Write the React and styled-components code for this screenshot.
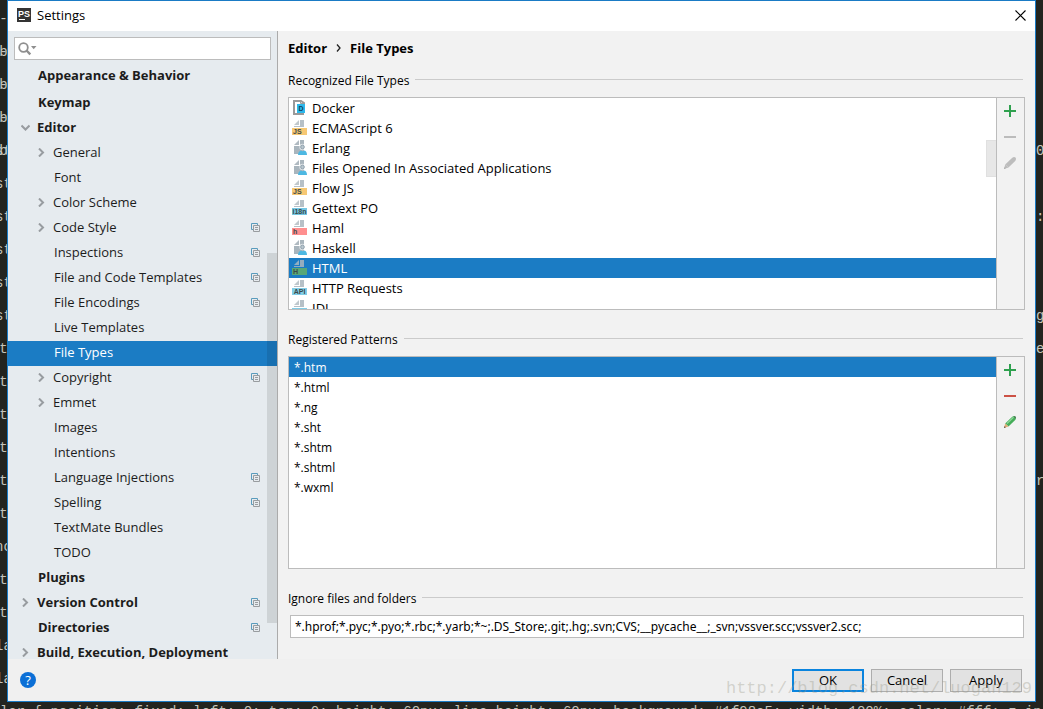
import React, { useState } from "react";
import styled, { createGlobalStyle } from "styled-components";

const tree = [
  { title: "Appearance & Behavior", level: 0, first: true },
  { title: "Keymap", level: 0 },
  { title: "Editor", level: 0, arrow: "down" },
  { title: "General", level: 1, arrow: "right" },
  { title: "Font", level: 1 },
  { title: "Color Scheme", level: 1, arrow: "right" },
  { title: "Code Style", level: 1, arrow: "right", project: true },
  { title: "Inspections", level: 1, project: true },
  { title: "File and Code Templates", level: 1, project: true },
  { title: "File Encodings", level: 1, project: true },
  { title: "Live Templates", level: 1 },
  { title: "File Types", level: 1 },
  { title: "Copyright", level: 1, arrow: "right", project: true },
  { title: "Emmet", level: 1, arrow: "right" },
  { title: "Images", level: 1 },
  { title: "Intentions", level: 1 },
  { title: "Language Injections", level: 1, project: true },
  { title: "Spelling", level: 1, project: true },
  { title: "TextMate Bundles", level: 1 },
  { title: "TODO", level: 1 },
  { title: "Plugins", level: 0 },
  { title: "Version Control", level: 0, arrow: "right", project: true },
  { title: "Directories", level: 0, project: true },
  { title: "Build, Execution, Deployment", level: 0, arrow: "right" },
];

const fileTypes = [
  { title: "Docker", kind: "docker" },
  { title: "ECMAScript 6", badge: "JS", color: "#f7c873" },
  { title: "Erlang", kind: "user" },
  { title: "Files Opened In Associated Applications", kind: "user" },
  { title: "Flow JS", badge: "JS", color: "#f7c873" },
  { title: "Gettext PO", badge: "i18n", color: "#74c6e3" },
  { title: "Haml", badge: "h", color: "#ff8f8f" },
  { title: "Haskell", kind: "user" },
  { title: "HTML", badge: "H", color: "#57a777" },
  { title: "HTTP Requests", badge: "API", color: "#82cde6" },
  { title: "IDL", badge: "IDL", color: "#82cde6" },
];

const patterns = ["*.htm", "*.html", "*.ng", "*.sht", "*.shtm", "*.shtml", "*.wxml"];

const codeLeft = ["-b", "-b", "-b", "-b", "st", "st", "st", "st", "st", "st", "t", "t", "t", "t", "t", "t", "nc", "t", "t", "la", "la"];
const codeRight = ["", "", "", "", "0", "", ":", "", "", "g", "e", "", "", "", "r"];
const codeBottom =
  "lar { position: fixed; left: 0; top: 0; height: 60px; line-height: 60px; background: #1f98e5; width: 100%; color: #fff; z-index: 9";

function Arrow({ dir }) {
  return (
    <svg width="9" height="9" viewBox="0 0 9 9" fill="none" stroke="#989ca0" strokeWidth="2">
      {dir === "down" && <path d="M0.5 2.5 4.5 6.5 8.5 2.5" />}
      {dir === "right" && <path d="M2 0.5 6 4.5 2 8.5" />}
    </svg>
  );
}

function ProjectIcon() {
  return (
    <svg width="9" height="9" viewBox="0 0 9 9" fill="none">
      <path d="M2.5 6.5H0.5V0.5H6.5V2" stroke="#5a9cbd" />
      <path d="M2.5 2.5H8.5V8.5H2.5Z" stroke="#999da0" />
      <path d="M4 4.5H7M4 6.5H7" stroke="#999da0" />
    </svg>
  );
}

function FileIcon({ kind, badge, color }) {
  if (kind === "docker") {
    return (
      <svg width="16" height="16" viewBox="0 0 16 16">
        <path d="M12 4V3L9 1H2V14H12" fill="none" stroke="#9a9a9a" strokeWidth="2" />
        <path d="M8.500 1V3.500H12" fill="none" stroke="#9a9a9a" />
        <rect x="5" y="4" width="8" height="9" fill="#2cb8eb" />
        <text x="9" y="11" textAnchor="middle" fontFamily="Liberation Sans, sans-serif" fontSize="7" fontWeight="700" fill="#14425a">
          D
        </text>
      </svg>
    );
  }
  if (kind === "user") {
    return (
      <svg width="16" height="16" viewBox="0 0 16 16">
        <path d="M2 5 7 0V5Z" fill="#b0bac1" />
        <path d="M8 0H12V14H2V6H8Z" fill="#a9b5bd" />
        <circle cx="10.500" cy="7" r="3.200" fill="#fff" opacity="0.6" />
        <circle cx="10.500" cy="7" r="1.800" fill="#b9c7cf" stroke="#8fa1ad" />
        <path d="M6 15C6 12 8 11 9 10.500C10 11.500 11.500 11.500 12.500 10.500C14 11 15 12.500 15 15Z" fill="#4db8e2" />
      </svg>
    );
  }
  return (
    <svg width="16" height="16" viewBox="0 0 16 16">
      <path d="M2 5 7 0V5Z" fill="#b0bac1" opacity="0.8" />
      <path d="M8 0H12V7H2V6H8Z" fill="#a9b5bd" opacity="0.85" />
      <rect x="0" y="8" width="15" height="7" fill={color} />
      <text
        x={badge.length > 2 ? 7.5 : 1}
        y="14"
        textAnchor={badge.length > 2 ? "middle" : "start"}
        fontFamily="Liberation Sans, sans-serif"
        fontSize="7"
        fontWeight="700"
        fill="#3c4a4a"
      >
        {badge}
      </text>
    </svg>
  );
}

function PlusIcon() {
  return (
    <svg width="12" height="12" viewBox="0 0 12 12">
      <path d="M5 0H7V5H12V7H7V12H5V7H0V5H5Z" fill="#2fa14f" />
    </svg>
  );
}

function MinusIcon({ off }) {
  return (
    <svg width="12" height="12" viewBox="0 0 12 12">
      <path d="M0 5H12V7H0Z" fill={off ? "#bcbcbc" : "#cc5145"} />
    </svg>
  );
}

function PencilIcon({ off }) {
  return (
    <svg width="12" height="12" viewBox="0 0 12 12">
      <path d="M1.200 7.500 8 1Q10 -0.600 11.500 0.500Q12.600 2 11.200 4L4.500 10.600Z" fill={off ? "#bdbdbd" : "#45ad59"} />
      {!off && <path d="M3 7.500 9.500 1.200" stroke="#8fd79a" strokeWidth="1.200" />}
      {!off && <path d="M9.800 0.500Q11 0 11.700 1Q12 1.800 11.500 2.500Z" fill="#56665a" />}
      <path d="M1.200 7.500 4.500 10.600 0 12Z" fill={off ? "#bdbdbd" : "#e3ad78"} />
      <path d="M0.600 10.300 1.800 11.300 0 12Z" fill={off ? "#a8a8a8" : "#333"} />
    </svg>
  );
}

function Tools({ locked, name }) {
  return (
    <ToolColumn>
      <ToolBtn aria-label={`Add ${name}`}>
        <PlusIcon />
      </ToolBtn>
      <ToolBtn aria-label={`Remove ${name}`} disabled={locked}>
        <MinusIcon off={locked} />
      </ToolBtn>
      <ToolBtn aria-label={`Edit ${name}`} disabled={locked}>
        <PencilIcon off={locked} />
      </ToolBtn>
    </ToolColumn>
  );
}

export default function App() {
  const [page, setPage] = useState("File Types");
  const [type, setType] = useState("HTML");
  const [pattern, setPattern] = useState("*.htm");
  const [ignored, setIgnored] = useState(
    "*.hprof;*.pyc;*.pyo;*.rbc;*.yarb;*~;.DS_Store;.git;.hg;.svn;CVS;__pycache__;_svn;vssver.scc;vssver2.scc;"
  );

  return (
    <Desktop>
      <GlobalStyle />
      <CodeEdge $left aria-hidden="true">
        {codeLeft.map((text, i) => (
          <span key={i}>{text}</span>
        ))}
      </CodeEdge>

      <Window>
        <TitleBar>
          <svg width="15" height="14" viewBox="0 0 15 14">
            <rect width="14" height="14" fill="#343434" />
            <text x="1" y="9" fontFamily="Liberation Sans, sans-serif" fontSize="9" fontWeight="700" fill="#fff">
              PS
            </text>
            <rect x="2" y="11" width="6" height="1" fill="#fff" />
          </svg>
          <h1>Settings</h1>
          <CloseBtn aria-label="Close">
            <svg width="11" height="11" viewBox="0 0 11 11" stroke="#000" strokeWidth="1.100">
              <path d="M0.500 0.500 10.500 10.500M10.500 0.500 0.500 10.500" />
            </svg>
          </CloseBtn>
        </TitleBar>

        <Body>
          <Sidebar>
            <Search>
              <svg width="19" height="14" viewBox="0 0 19 14" fill="none">
                <circle cx="5.500" cy="5.500" r="4.300" stroke="#8f8f8f" strokeWidth="1.800" />
                <path d="M8.500 8.500 12.300 12.300" stroke="#8f8f8f" strokeWidth="2.400" />
                <path d="M13 4H18.500L15.700 7.200Z" fill="#8f8f8f" />
              </svg>
              <input type="text" aria-label="Search settings" />
            </Search>
            <Tree>
              {tree.map((item) => (
                <TreeRow
                  key={item.title}
                  $level={item.level}
                  $first={item.first}
                  $leaf={!item.arrow}
                  $active={item.title === page}
                  onClick={() => setPage(item.title)}
                >
                  <Arrow dir={item.arrow} />
                  <span>{item.title}</span>
                  {item.project && <ProjectIcon />}
                </TreeRow>
              ))}
            </Tree>
            <SideThumb />
          </Sidebar>

          <Content>
            <Crumbs>
              <span>Editor</span>
              <svg width="5" height="8" viewBox="0 0 5 8" fill="none" stroke="#222" strokeWidth="1.300">
                <path d="M1 0.500 4 4 1 7.500" />
              </svg>
              <span>File Types</span>
            </Crumbs>

            <GroupTitle>
              <h2>Recognized File Types</h2>
            </GroupTitle>
            <Panel>
              <List>
                {fileTypes.map((item) => (
                  <ListRow key={item.title} $active={item.title === type} onClick={() => setType(item.title)}>
                    <FileIcon {...item} />
                    <span>{item.title}</span>
                  </ListRow>
                ))}
                <ListThumb />
              </List>
              <Tools locked name="file type" />
            </Panel>

            <GroupTitle $gap>
              <h2>Registered Patterns</h2>
            </GroupTitle>
            <Panel>
              <List>
                {patterns.map((item) => (
                  <ListRow key={item} $plain $active={item === pattern} onClick={() => setPattern(item)}>
                    <span>{item}</span>
                  </ListRow>
                ))}
              </List>
              <Tools name="pattern" />
            </Panel>

            <GroupTitle $gap>
              <label htmlFor="ignored">Ignore files and folders</label>
            </GroupTitle>
            <TextField id="ignored" type="text" value={ignored} onChange={(e) => setIgnored(e.target.value)} />
          </Content>
        </Body>

        <Footer>
          <HelpBtn aria-label="Help">?</HelpBtn>
          <DialogBtn $primary>OK</DialogBtn>
          <DialogBtn>Cancel</DialogBtn>
          <DialogBtn>Apply</DialogBtn>
        </Footer>
        <Watermark>http://blog.csdn.net/luogan129</Watermark>
      </Window>

      <CodeEdge aria-hidden="true">
        {codeRight.map((text, i) => (
          <span key={i}>{text}</span>
        ))}
      </CodeEdge>
      <CodeLine aria-hidden="true">{codeBottom}</CodeLine>
    </Desktop>
  );
}

const GlobalStyle = createGlobalStyle`
  * {
    box-sizing: border-box;
  }

  body {
    margin: 0;
    font-family: "Open Sans", "Noto Sans", sans-serif;
    font-size: 13px;
    color: #000;
  }

  button,
  input {
    font: inherit;
    color: inherit;
    margin: 0;
    padding: 0;
    border: 0;
    outline: none;
    background: transparent;
  }

  h1,
  h2 {
    margin: 0;
    font-size: inherit;
    font-weight: 400;
  }
`;

const Desktop = styled.div`
  display: grid;
  grid-template-columns: 7px minmax(0, 1fr) 7px;
  grid-template-rows: minmax(0, 1fr) 7px;
  height: 100vh;
  overflow: hidden;
  background: #23241f;
  color: #c4c4bb;
  font-family: "Liberation Mono", monospace;
  font-size: 14px;
`;

const CodeEdge = styled.div`
  display: flex;
  flex-direction: column;
  align-items: ${(props) => (props.$left ? "center" : "flex-start")};
  padding-top: 3px;
  overflow: hidden;

  span {
    flex: none;
    height: 33px;
    line-height: 33px;
  }
`;

const CodeLine = styled.div`
  grid-column: 1 / -1;
  padding-top: 2px;
  line-height: 16px;
  white-space: pre;
  overflow: hidden;
`;

const Window = styled.div`
  position: relative;
  display: flex;
  flex-direction: column;
  min-width: 0;
  border: 1px solid #1a7bc5;
  background: #f0f0f0;
  color: #000;
  font-family: "Open Sans", "Noto Sans", sans-serif;
  font-size: 13px;
`;

const TitleBar = styled.header`
  flex: none;
  display: flex;
  align-items: center;
  gap: 5px;
  height: 30px;
  padding: 0 9px 2px;
  background: #fff;

  h1 {
    flex: 1;
  }
`;

const CloseBtn = styled.button`
  display: flex;
`;

const Body = styled.div`
  flex: 1;
  display: flex;
  min-height: 0;
`;

const Sidebar = styled.aside`
  position: relative;
  flex: none;
  display: flex;
  flex-direction: column;
  width: 270px;
  padding-top: 6px;
  border-right: 1px solid #ababab;
  background: #e6ebef;
  overflow: hidden;
`;

const Search = styled.label`
  flex: none;
  display: flex;
  align-items: center;
  height: 23px;
  margin: 0 6px 4px;
  padding-left: 3px;
  border: 1px solid #bcbcbc;
  background: #fff;

  input {
    flex: 1;
    min-width: 0;
  }
`;

const Tree = styled.nav`
  display: flex;
  flex-direction: column;
`;

const TreeRow = styled.button`
  flex: none;
  display: flex;
  align-items: center;
  gap: ${(props) => (props.$leaf ? 8 : 7)}px;
  height: ${(props) => (props.$first ? 27 : 25)}px;
  padding: 0 17px 0 ${(props) => (props.$level ? 29 : 13)}px;
  padding-bottom: ${(props) => (props.$first ? 4 : 2)}px;
  background: ${(props) => (props.$active ? "#1b7cc4" : "transparent")};
  color: ${(props) => (props.$active ? "#fff" : "#1c1c1c")};
  font-weight: ${(props) => (props.$level ? 400 : 700)};
  text-align: left;
  white-space: nowrap;

  span {
    flex: 1;
    padding-bottom: 2px;
  }
`;

const SideThumb = styled.div`
  position: absolute;
  top: 222px;
  right: 0;
  bottom: 36px;
  width: 10px;
  background: rgba(0, 0, 0, 0.1);
`;

const Content = styled.main`
  flex: 1;
  display: flex;
  flex-direction: column;
  min-width: 0;
  padding: 0 10px 21px;
  background: #f2f2f2;
`;

const Crumbs = styled.div`
  flex: none;
  display: flex;
  align-items: center;
  gap: 9px;
  height: 36px;
  padding-bottom: 2px;
  font-weight: 700;
`;

const GroupTitle = styled.div`
  flex: none;
  display: flex;
  align-items: center;
  gap: 6px;
  height: 28px;
  margin: ${(props) => (props.$gap ? 16 : 0)}px 2px 2px 0;
  font-size: 12px;

  h2,
  label {
    padding-bottom: 2px;
  }

  &::after {
    content: "";
    flex: 1;
    height: 1px;
    margin-bottom: 3px;
    background: #cbcbcb;
  }
`;

const Panel = styled.section`
  flex: 1;
  display: flex;
  min-height: 0;
  border: 1px solid #bcbcbc;
`;

const List = styled.div`
  position: relative;
  flex: 1;
  display: flex;
  flex-direction: column;
  min-width: 0;
  background: #fff;
  overflow: hidden;
`;

const ListRow = styled.button`
  flex: none;
  display: flex;
  align-items: center;
  gap: 4px;
  height: 20px;
  padding-left: ${(props) => (props.$plain ? 5 : 3)}px;
  background: ${(props) => (props.$active ? "#1b7cc4" : "transparent")};
  color: ${(props) => (props.$active ? "#fff" : "#000")};
  font-size: ${(props) => (props.$plain ? 12 : 13)}px;
  text-align: left;
`;

const ListThumb = styled.div`
  position: absolute;
  top: 42px;
  right: 0;
  width: 10px;
  height: 37px;
  border: 1px solid #e0e0e0;
  border-right: 0;
  background: #e7e7e7;
`;

const ToolColumn = styled.div`
  flex: none;
  width: 28px;
  border-left: 1px solid #bcbcbc;
`;

const ToolBtn = styled.button`
  display: flex;
  align-items: center;
  justify-content: center;
  width: 26px;
  height: 26px;
`;

const TextField = styled.input`
  flex: none;
  height: 23px;
  margin: 0 1px 0 2px;
  padding: 0 4px;
  border: 1px solid #bcbcbc;
  background: #fff;
  font-family: "Noto Sans", sans-serif;
  font-size: 12px;
`;

const Footer = styled.footer`
  flex: none;
  display: flex;
  align-items: center;
  gap: 7px;
  height: 42px;
  padding: 0 13px 0 12px;
`;

const HelpBtn = styled.button`
  width: 16px;
  height: 16px;
  margin-right: auto;
  border-radius: 50%;
  background: #0b6fd6;
  color: #fff;
  line-height: 16px;
`;

const DialogBtn = styled.button`
  width: 72px;
  height: 23px;
  border: ${(props) => (props.$primary ? "2px solid #0a84de" : "1px solid #adadad")};
  background: #e2e2e2;
  line-height: 18px;
`;

const Watermark = styled.div`
  position: absolute;
  right: 3px;
  bottom: 2px;
  color: rgba(150, 150, 135, 0.35);
  font-family: "Liberation Mono", monospace;
  font-size: 17px;
  line-height: 20px;
  pointer-events: none;
`;
